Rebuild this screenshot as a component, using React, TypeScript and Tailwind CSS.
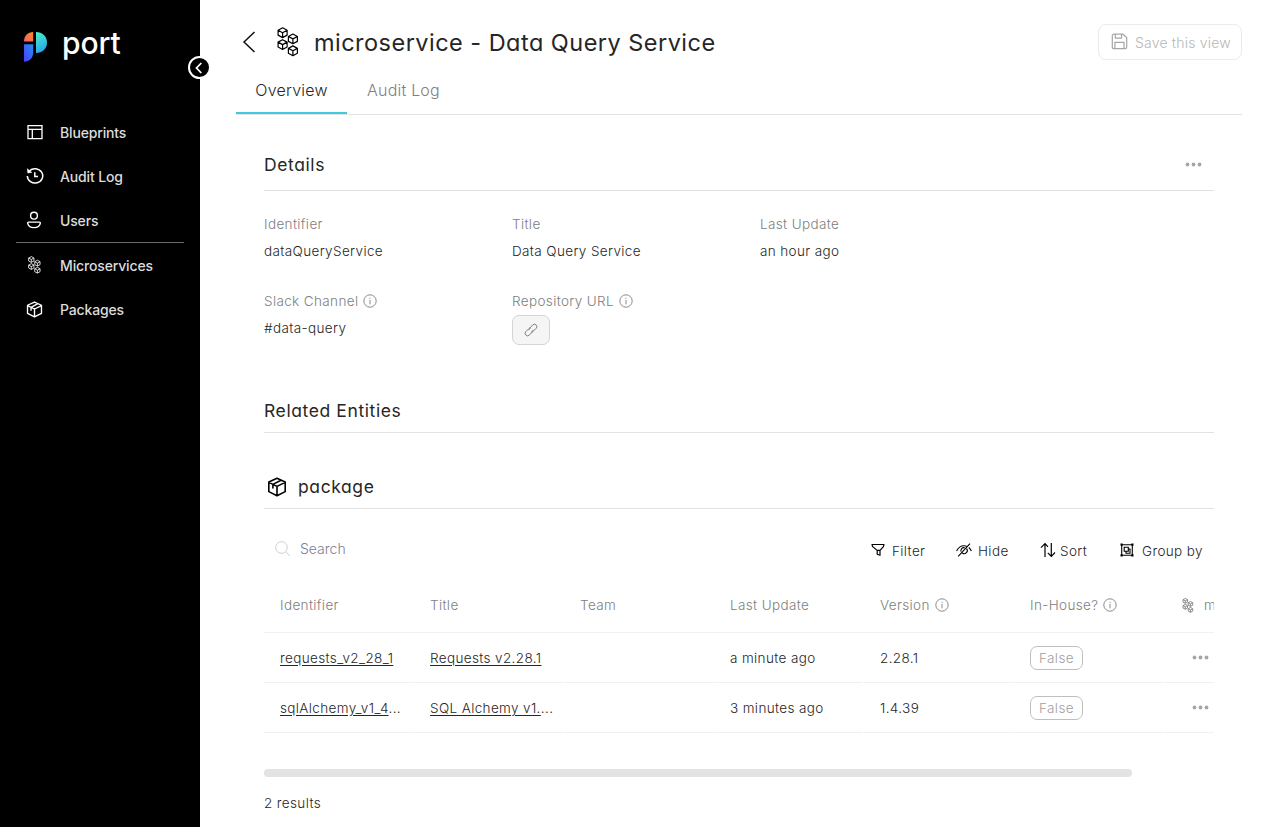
import type { ReactNode } from "react";

const cube = (cx: number, cy: number, r = 4.9) => {
  const w = r * 0.92;
  const h = r / 2;
  return `M${cx} ${cy - r}L${cx + w} ${cy - h}V${cy + h}L${cx} ${cy + r}L${cx - w} ${cy + h}V${cy - h}ZM${cx - w} ${cy - h}L${cx} ${cy}L${cx + w} ${cy - h}M${cx} ${cy}V${cy + r}`;
};

function Cubes({ className, stroke = 1.2 }: { className: string; stroke?: number }) {
  return (
    <svg viewBox="0 0 22 30" className={className} fill="none" stroke="currentColor" strokeWidth={stroke} strokeLinejoin="round">
      <path d={cube(5.6, 5.7)} />
      <path d={cube(15.9, 11.9)} />
      <path d={cube(5.6, 17.6)} />
      <path d={cube(15.9, 23.8)} />
    </svg>
  );
}

function PackageIcon({ className }: { className: string }) {
  return (
    <svg viewBox="0 0 20 20" className={className} fill="none" stroke="currentColor" strokeWidth="1.6" strokeLinejoin="round" strokeLinecap="round">
      <path d="M10 1.2L18.2 5V14.6L10 18.8L1.8 14.6V5ZM1.8 5.4L10 9.4L18.2 5.4M10 9.4V18.6M5.9 11V7.4L14 3.2" />
    </svg>
  );
}

function Dots({ className = "" }: { className?: string }) {
  return (
    <svg width="17" height="5" viewBox="0 0 17 5" className={className} fill="#a6a6a6">
      <circle cx="2.5" cy="2.5" r="1.9" />
      <circle cx="8.5" cy="2.5" r="1.9" />
      <circle cx="14.5" cy="2.5" r="1.9" />
    </svg>
  );
}

function Info() {
  return (
    <svg width="14" height="14" viewBox="0 0 14 14" fill="none" stroke="#8c8c8c" strokeWidth="1" className="shrink-0">
      <circle cx="7" cy="7" r="6.200" />
      <path d="M7 6V10.300M7 3.700V4.800" />
    </svg>
  );
}

function NavItem({ icon, label }: { icon: ReactNode; label: string }) {
  return (
    <a className="flex h-[44px] items-center pl-[25px]">
      <span className="flex w-[19px] items-center justify-center text-white">{icon}</span>
      <span className="ml-[16px] text-[14px] font-medium tracking-[-0.15px] text-[#dcdcdc]">{label}</span>
    </a>
  );
}

function Sidebar() {
  return (
    <aside className="relative h-full w-[200px] shrink-0 bg-black">
      <div className="flex h-[110px] items-start pt-[22px] pl-[24px]">
        <svg width="24" height="32" viewBox="0 0 24 32" className="mt-[9px]">
          <defs>
            <linearGradient id="lgA" x1="0" y1="1" x2="1" y2="0">
              <stop offset="0" stopColor="#fb5b78" />
              <stop offset="1" stopColor="#ff8a1c" />
            </linearGradient>
            <linearGradient id="lgB" x1="0" y1="1" x2="1" y2="0">
              <stop offset="0" stopColor="#4a3cff" />
              <stop offset="1" stopColor="#2490f0" />
            </linearGradient>
            <linearGradient id="lgC" x1="0" y1="0" x2="0.3" y2="1">
              <stop offset="0" stopColor="#4ff0c8" />
              <stop offset="1" stopColor="#28a8ea" />
            </linearGradient>
          </defs>
          <path d="M0 10.600C0 4.500 4 1 9.200 1V10.600Z" fill="url(#lgA)" />
          <path d="M0 13.300H9.200V21C9.200 27 5.500 30.700 0 30.700Z" fill="url(#lgB)" />
          <path d="M12 1C18.500 1 23 5.500 23 11.500S18.500 22 12 22Z" fill="url(#lgC)" />
        </svg>
        <span className="mt-px ml-[14px] text-[30px] leading-[40px] font-medium tracking-[-0.1px] text-white">port</span>
      </div>
      <button className="absolute top-[56px] left-[188px] flex size-[23px] items-center justify-center rounded-full border-2 border-white bg-black">
        <svg width="8" height="12" viewBox="0 0 8 12" fill="none" stroke="white" strokeWidth="1.800" className="mr-px">
          <path d="M6.300 1L1.500 6L6.300 11" />
        </svg>
      </button>
      <nav>
        <NavItem
          label="Blueprints"
          icon={
            <svg width="16" height="16" viewBox="0 0 16 16" fill="none" stroke="currentColor" strokeWidth="1.300">
              <path d="M1 1.600H15V14.600H1ZM1 5.300H15M5.300 5.300V14.600" />
            </svg>
          }
        />
        <NavItem
          label="Audit Log"
          icon={
            <svg width="18" height="18" viewBox="0 0 18 18" fill="none" stroke="currentColor" strokeWidth="1.500">
              <path d="M1.300 9A7.700 7.200 0 1 0 3.400 3.900M8.800 5.200V9.600H12" />
              <path d="M1.300 1.700L1.800 6L5.800 5.400Z" fill="currentColor" strokeWidth="0.500" />
            </svg>
          }
        />
        <NavItem
          label="Users"
          icon={
            <svg width="16" height="18" viewBox="0 0 16 18" fill="none" stroke="currentColor" strokeWidth="1.400" className="mr-px">
              <circle cx="8" cy="4.700" r="3.400" />
              <path d="M2.600 11.100H13.400C14 11.100 14.400 11.500 14.300 12.100C13.900 15 11.500 16.600 8 16.600S2.100 15 1.700 12.100C1.600 11.500 2 11.100 2.600 11.100Z" />
            </svg>
          }
        />
        <div className="mx-[16px] h-px bg-[#6b6b6b]" />
        <NavItem label="Microservices" icon={<Cubes className="h-[18px] w-[13px]" stroke={1.4} />} />
        <NavItem label="Packages" icon={<PackageIcon className="size-[17px]" />} />
      </nav>
    </aside>
  );
}

const heading = "[font-feature-settings:'cv11'] font-normal text-[#262626]";
const subheading = "pt-[2px] text-[17.5px] tracking-[0.6px]";

function Field({ label, info, children }: { label: string; info?: boolean; children: ReactNode }) {
  return (
    <div className="h-[77px]">
      <div className="flex h-[20px] items-center gap-[5px] text-[#808080]">
        {label}
        {info && <Info />}
      </div>
      {children}
    </div>
  );
}

function Value({ children }: { children: ReactNode }) {
  return <div className="mt-[7px] flex h-[20px] items-center text-[#262626]">{children}</div>;
}

const rows = [
  { id: "requests_v2_28_1", title: "Requests v2.28.1", cut: false, updated: "a minute ago", version: "2.28.1" },
  { id: "sqlAlchemy_v1_4", title: "SQL Alchemy v1.", cut: true, updated: "3 minutes ago", version: "1.4.39" },
];

const cell = "flex h-full w-[149px] mr-px shrink-0 items-center border-b border-[#f0f0f0] pl-[16px] pt-px";
const headCell = "flex w-[150px] shrink-0 items-center gap-[5px] pl-[16px]";
const link = "underline underline-offset-[2px]";

function Table() {
  return (
    <div className="w-full overflow-hidden">
      <div className="flex h-[55px] border-b border-[#f0f0f0] text-[#808080]">
        <div className={headCell}>Identifier</div>
        <div className={headCell}>Title</div>
        <div className={headCell}>Team</div>
        <div className={headCell}>Last Update</div>
        <div className={headCell}>Version <Info /></div>
        <div className={headCell}>In-House? <Info /></div>
        <div className="flex w-[150px] shrink-0 items-center pl-[18px]">
          <Cubes className="h-[15px] w-[12px]" stroke={1.8} />
          <span className="ml-[10px]">microservice</span>
        </div>
      </div>
      {rows.map((r) => (
        <div key={r.id} className="flex h-[50px] text-[#262626]">
          <div className={cell}><span><span className={link}>{r.id}</span>{r.cut && "..."}</span></div>
          <div className={cell}><span><span className={link}>{r.title}</span>{r.cut && "..."}</span></div>
          <div className={cell} />
          <div className={cell}>{r.updated}</div>
          <div className={cell}>{r.version}</div>
          <div className={cell}>
            <span className="flex h-[24px] w-[53px] items-center justify-center rounded-[7px] border border-[#bfbfbf] pt-px text-[#a0a0a0]">False</span>
          </div>
          <div className="flex flex-1 items-center border-b border-[#f0f0f0] pl-[28px]"><Dots /></div>
        </div>
      ))}
    </div>
  );
}

function Tool({ icon, label, className }: { icon: ReactNode; label: string; className: string }) {
  return (
    <button className={`flex items-center text-[#262626] ${className}`}>
      {icon}
      {label}
    </button>
  );
}

export default function App() {
  return (
    <div className="flex h-[827px] w-full overflow-hidden bg-white font-['Inter',sans-serif] text-[13.5px] font-light tracking-[0.37px]">
      <Sidebar />
      <main className="min-w-0 flex-1 px-[36px] pt-[20px]">
        <header className="flex h-[46px] items-center">
          <svg width="16" height="22" viewBox="0 0 16 22" fill="none" stroke="#111" strokeWidth="1.500" className="mt-[-2px] ml-[6px]">
            <path d="M12.500 1L2 11L12.500 21" />
          </svg>
          <Cubes className="mt-[-2px] ml-[19px] h-[30px] w-[22px] text-black" />
          <h1 className={`${heading} ml-[15px] text-[23.5px] tracking-[0.47px] whitespace-nowrap`}>
            microservice - Data Query Service
          </h1>
          <button className="mt-[-2px] ml-auto flex h-[36px] w-[144px] items-center rounded-[8px] border border-[#ebebeb] pl-[12px] text-[14px] tracking-[0.2px] text-[#b8b8b8]">
            <svg width="17" height="17" viewBox="0 0 17 17" fill="none" stroke="#a6a6a6" strokeWidth="1.200" className="mr-[7px] mb-px">
              <path d="M3 1.200H11.800L15.700 4.600V14C15.700 15 15 15.700 14 15.700H3C2 15.700 1.300 15 1.300 14V3C1.300 2 2 1.200 3 1.200ZM4.300 1.200V5.200H10.500V1.200M3.900 15.700V9.300H13V15.700" />
            </svg>
            Save this view
          </button>
        </header>
        <div className="flex h-[49px] border-b border-[#e3e3e3] text-[16px] tracking-[0.2px]">
          <div className="flex h-[48px] w-[111px] items-center justify-center border-b-2 border-[#41c9dc] pt-[2px] text-[#262626]">Overview</div>
          <div className="flex h-[48px] w-[113px] items-center justify-center text-[#808080]">Audit Log</div>
        </div>
        <div className="px-[28px]">
          <div className="mt-[24px] flex h-[52px] items-center justify-between border-b border-[#e3e3e3]">
            <h2 className={`${heading} ${subheading}`}>Details</h2>
            <Dots className="mr-[12px]" />
          </div>
          <div className="mt-[23px] grid grid-cols-[248px_248px_248px]">
            <Field label="Identifier"><Value>dataQueryService</Value></Field>
            <Field label="Title"><Value>Data Query Service</Value></Field>
            <Field label="Last Update"><Value>an hour ago</Value></Field>
            <Field label="Slack Channel" info><Value>#data-query</Value></Field>
            <Field label="Repository URL" info>
              <button className="mt-[4px] flex h-[30px] w-[38px] items-center justify-center rounded-[7px] border border-[#d4d4d4] bg-[#f5f5f5]">
                <svg width="14" height="14" viewBox="0 0 14 14" fill="none" stroke="#808080" strokeWidth="1">
                  <path d="M5.200 7.200A2.300 2.300 0 0 1 5.600 5.200L8.600 2A2.300 2.300 0 0 1 12.200 5.300L9.200 8.300A2.200 2.200 0 0 1 7.200 9" />
                  <path d="M8.900 6.800A2.300 2.300 0 0 1 8.500 8.800L5.400 12A2.300 2.300 0 0 1 1.800 8.700L4.800 5.700A2.200 2.200 0 0 1 6.800 5" />
                </svg>
              </button>
            </Field>
          </div>
          <div className="mt-[21px] flex h-[44px] items-center border-b border-[#e3e3e3]">
            <h2 className={`${heading} ${subheading}`}>Related Entities</h2>
          </div>
          <div className="mt-[32px] flex h-[44px] items-center border-b border-[#e3e3e3]">
            <PackageIcon className="ml-[3px] size-[20px] text-black" />
            <h2 className={`${heading} ${subheading} ml-[11px]`}>package</h2>
          </div>
          <div className="flex h-[69px] items-center pt-[15px]">
            <div className="mb-[5px] flex items-center text-[14px] tracking-normal text-[#7d8194]">
              <svg width="16" height="16" viewBox="0 0 16 16" fill="none" stroke="#cfcfcf" strokeWidth="1" className="mr-[9px] ml-[11px]">
                <circle cx="6.500" cy="6.500" r="5.800" />
                <path d="M10.800 10.800L15.200 15.200" />
              </svg>
              Search
            </div>
            <Tool
              label="Filter"
              className="ml-auto w-[85px] gap-[7px]"
              icon={
                <svg width="14" height="14" viewBox="0 0 14 14" fill="none" stroke="black" strokeWidth="1.200" strokeLinejoin="round" className="mt-[-2px]">
                  <path d="M1 1.500H13L12.400 3.600L9 7.400V12.300L6.200 11.300V7.400L1.600 3.600ZM6.200 7.400H9" />
                </svg>
              }
            />
            <Tool
              label="Hide"
              className="w-[84px] gap-[6px]"
              icon={
                <svg width="16" height="14" viewBox="0 0 16 14" fill="none" stroke="black" strokeWidth="1.100" className="mt-[-2px]">
                  <path d="M.6 8C2.500 3.900 5.200 2.700 8 2.700C9 2.700 9.900 2.900 10.700 3.200M12.800 4.500C13.900 5.400 14.800 6.600 15.400 8M14 .7L2.200 13.300M10.600 5.600A3.100 3.100 0 0 1 6.300 10M5 8.600A3.100 3.100 0 0 1 8.600 4.700M6.800 8.300L8.900 6.100" />
                </svg>
              }
            />
            <Tool
              label="Sort"
              className="w-[80px] gap-[4px]"
              icon={
                <svg width="16" height="16" viewBox="0 0 16 16" fill="none" stroke="black" strokeWidth="1.200" className="mt-[-2px]">
                  <path d="M5 15V1.700M1 5.600L5 1.600L8 4.800M11.300 1V14.300M7.800 10.800L11.300 14.300L15 10.500" />
                </svg>
              }
            />
            <Tool
              label="Group by"
              className="w-[94px] gap-[8px] whitespace-nowrap"
              icon={
                <svg width="14" height="14" viewBox="0 0 14 14" fill="none" stroke="black" strokeWidth="1.100" className="mt-[-2px] shrink-0">
                  <path d="M1.700 1.700H12.300V12.300H1.700ZM4.200 4.200H8.300V8.300H4.200ZM8.300 6H10V10.200H6V8.300" />
                  <path d="M.5 .5H2.700V2.700H.5ZM11.300 .5H13.500V2.700H11.300ZM.5 11.300H2.700V13.500H.5ZM11.300 11.300H13.500V13.500H11.300Z" fill="black" stroke="none" />
                </svg>
              }
            />
          </div>
          <Table />
          <div className="mt-[36px] h-[8px] w-[868px] rounded-full bg-[#e3e3e3]" />
          <div className="mt-[16px] flex h-[20px] items-center text-[#262626]">2 results</div>
        </div>
      </main>
    </div>
  );
}
